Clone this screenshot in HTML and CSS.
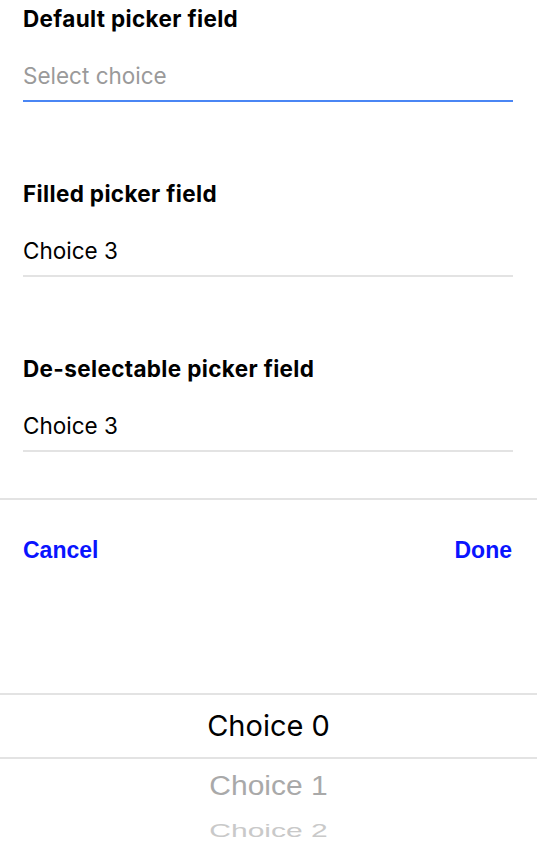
FILE: index.html
```html
<!DOCTYPE html>
<html>
<head>
<meta charset="utf-8">
<link rel="stylesheet" href="styles.css">
</head>
<body>
<div class="form">
  <div class="field">
    <div class="label">Default picker field</div>
    <div class="value placeholder focused">Select choice</div>
  </div>
  <div class="field">
    <div class="label">Filled picker field</div>
    <div class="value">Choice 3</div>
  </div>
  <div class="field">
    <div class="label">De-selectable picker field</div>
    <div class="value">Choice 3</div>
  </div>
</div>
<div class="sheet">
  <div class="toolbar">
    <span class="btn">Cancel</span>
    <span class="btn">Done</span>
  </div>
  <div class="wheel">
    <div class="opt selected">Choice 0</div>
    <div class="opt near">Choice 1</div>
    <div class="opt far">Choice 2</div>
  </div>
</div>
</body>
</html>
```
FILE: styles.css
```css
html, body {
  margin: 0;
  padding: 0;
  background: #fff;
  font-family: Inter, "Liberation Sans", Arial, sans-serif;
  color: #000;
  overflow: hidden;
}
.form {
  padding: 7px 24px 0 23px;
}
.field + .field {
  margin-top: 80px;
}
.label {
  font-weight: bold;
  font-size: 22.5px;
  letter-spacing: 0.35px;
  line-height: 24px;
  height: 24px;
}
.value {
  margin-top: 20px;
  height: 49px;
  line-height: 50px;
  font-size: 22.5px;
  border-bottom: 2px solid #e3e3e3;
  box-sizing: content-box;
}
.value.placeholder {
  color: #9a9a9a;
}
.value.focused {
  border-bottom-color: #4a86f4;
}
.sheet {
  margin-top: 46px;
  border-top: 2px solid #e3e3e3;
}
.toolbar {
  display: flex;
  justify-content: space-between;
  align-items: center;
  padding: 0 25px 0 23px;
  height: 100px;
}
.btn {
  color: #0a14ff;
  font-family: "Liberation Sans", Arial, sans-serif;
  font-weight: bold;
  font-size: 23px;
}
.wheel {
  margin-top: 93px;
  display: flex;
  flex-direction: column;
  align-items: center;
}
.opt {
  font-family: "Liberation Sans", Arial, sans-serif;
}
.selected {
  font-family: Inter, "Liberation Sans", Arial, sans-serif;
  width: 100%;
  text-align: center;
  height: 62px;
  line-height: 62px;
  font-size: 29px;
  border-top: 2px solid #e3e3e3;
  border-bottom: 2px solid #e3e3e3;
}
.near {
  font-size: 30px;
  color: #a9a9a9;
  line-height: 30px;
  margin-top: 12px;
  transform: scaleY(0.9);
}
.far {
  font-size: 30px;
  color: #c9c9c9;
  line-height: 26px;
  margin-top: 17px;
  transform: scaleY(0.6);
}
```
